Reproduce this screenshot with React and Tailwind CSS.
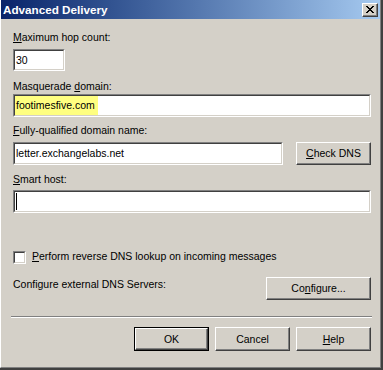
import React from "react";

const font = { fontFamily: '"Liberation Sans", Arial, sans-serif' };

// classic raised 3D button
const Button = ({ children, isDefault, className = "" }) => {
  const face = (
    <div className="flex-1 flex items-center justify-center bg-[#d4d0c8] border border-t-white border-l-white border-r-[#404040] border-b-[#404040] shadow-[inset_-1px_-1px_0_#808080] text-[10.5px] leading-[13px] text-black">
      {children}
    </div>
  );
  if (isDefault) {
    return (
      <div className={`flex border border-black ${className}`}>{face}</div>
    );
  }
  return <div className={`flex ${className}`}>{face}</div>;
};

// classic sunken edit box
const Field = ({ children, className = "" }) => (
  <div className={`flex border border-t-[#808080] border-l-[#808080] border-r-white border-b-white ${className}`}>
    <div className="flex-1 flex items-center bg-white border border-t-[#404040] border-l-[#404040] border-r-[#d4d0c8] border-b-[#d4d0c8] text-[10.5px] leading-[13px] text-black overflow-hidden">
      {children}
    </div>
  </div>
);

const Label = ({ pre = "", u, post = "", className = "" }) => (
  <div className={`text-[10.5px] leading-[13px] text-black whitespace-nowrap ${className}`}>
    {pre}
    <span className="underline underline-offset-[1px]">{u}</span>
    {post}
  </div>
);

const CloseGlyph = () => {
  const rows = [
    "11000011",
    "01100110",
    "00111100",
    "00011000",
    "00111100",
    "01100110",
    "11000011",
  ];
  return (
    <svg width="8" height="7" viewBox="0 0 8 7" shapeRendering="crispEdges">
      {rows.map((r, y) =>
        r.split("").map((c, x) =>
          c === "1" ? <rect key={`${x}-${y}`} x={x} y={y} width="1" height="1" fill="#000" /> : null
        )
      )}
    </svg>
  );
};

export default function App() {
  return (
    <div className="w-[383px] h-[370px] flex bg-[#404040] pr-[2px] pb-[2px]" style={font}>
      <div className="flex-1 flex flex-col bg-[#d4d0c8] border-l border-l-white border-r border-r-[#808080] border-b border-b-[#808080]">
        {/* title bar */}
        <div className="h-[19px] flex items-center justify-between pl-[2px] pr-[2px] bg-gradient-to-r from-[#0a246a] to-[#a6caf0]">
          <span className="text-white font-bold text-[11.7px] leading-[14px]">Advanced Delivery</span>
          <div className="w-[16px] h-[14px] flex items-center justify-center bg-[#d4d0c8] border border-t-white border-l-white border-r-[#404040] border-b-[#404040] shadow-[inset_-1px_-1px_0_#808080]">
            <CloseGlyph />
          </div>
        </div>

        <div className="flex-1 flex flex-col pl-[12px] pr-[9px]">
          <Label className="mt-[12px]" u="M" post="aximum hop count:" />
          <Field className="mt-[5px] w-[52px] h-[22px]">
            <span className="pl-[1px]">30</span>
          </Field>

          <Label className="mt-[9px]" pre="Masquerade " u="d" post="omain:" />
          <Field className="mt-[1px] h-[23px]">
            <span className="self-stretch flex items-center bg-[#ffff80] pl-[1px] pr-[3px]">footimesfive.com</span>
          </Field>

          <Label className="mt-[7px]" u="F" post="ully-qualified domain name:" />
          <div className="mt-[5px] flex items-center justify-between">
            <Field className="w-[270px] h-[23px]">
              <span className="pl-[1px]">letter.exchangelabs.net</span>
            </Field>
            <Button className="w-[75px] h-[23px]">
              <span>
                <span className="underline underline-offset-[1px]">C</span>heck DNS
              </span>
            </Button>
          </div>

          <Label className="mt-[8px]" u="S" post="mart host:" />
          <Field className="mt-[4px] h-[23px]">
            <span className="ml-[1px] w-[1px] h-[17px] bg-black" />
          </Field>

          <div className="mt-[37px] flex items-start">
            <div className="mt-[1px] flex w-[13px] h-[13px] border border-t-[#808080] border-l-[#808080] border-r-white border-b-white">
              <div className="flex-1 bg-white border border-t-[#404040] border-l-[#404040] border-r-[#d4d0c8] border-b-[#d4d0c8]" />
            </div>
            <Label className="ml-[6px]" u="P" post="erform reverse DNS lookup on incoming messages" />
          </div>

          <div className="mt-[13px] flex items-start justify-between">
            <div className="mt-[1px] text-[10.5px] leading-[13px] text-black">Configure external DNS Servers:</div>
            <Button className="w-[105px] h-[23px]">
              <span>
                Co<span className="underline underline-offset-[1px]">n</span>figure...
              </span>
            </Button>
          </div>

          <div className="mt-[16px] -ml-[2px] -mr-[1px] h-[2px] border-t border-t-[#808080] border-b border-b-white" />

          <div className="mt-[9px] flex justify-end gap-[6px]">
            <Button isDefault className="w-[75px] h-[24px]">OK</Button>
            <Button className="w-[75px] h-[24px]">Cancel</Button>
            <Button className="w-[75px] h-[24px]">
              <span>
                <span className="underline underline-offset-[1px]">H</span>elp
              </span>
            </Button>
          </div>
        </div>
      </div>
    </div>
  );
}
